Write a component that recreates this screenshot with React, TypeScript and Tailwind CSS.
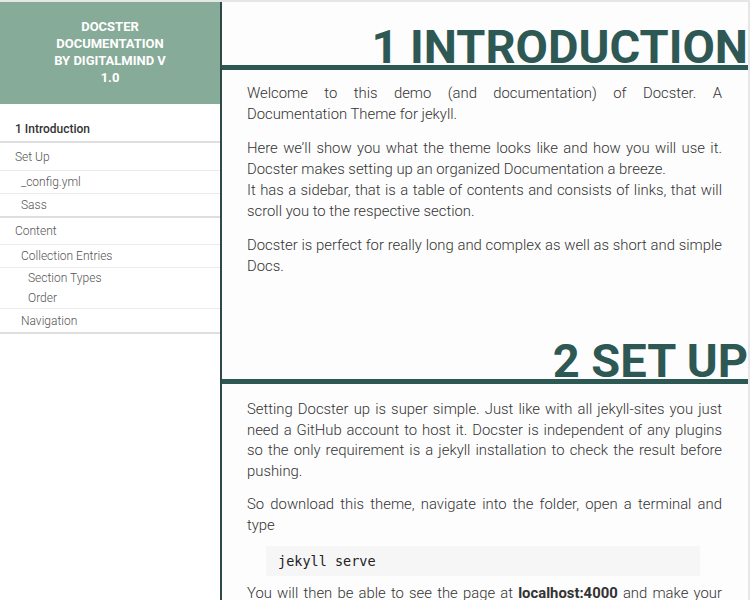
import React from 'react';

// Sidebar table of contents rows: label, indent, row height and divider style
type NavRow = {
  label: string;
  indent: string;
  height: string;
  divider: 'thick' | 'thin' | 'none';
  active?: boolean;
};

const navRows: NavRow[] = [
  { label: '1 Introduction', indent: 'pl-[15px]', height: 'h-[27px]', divider: 'thick', active: true },
  { label: 'Set Up', indent: 'pl-[15px]', height: 'h-[28px]', divider: 'thin' },
  { label: '_config.yml', indent: 'pl-[21px]', height: 'h-[23px]', divider: 'thin' },
  { label: 'Sass', indent: 'pl-[21px]', height: 'h-[24px]', divider: 'thick' },
  { label: 'Content', indent: 'pl-[15px]', height: 'h-[27px]', divider: 'thin' },
  { label: 'Collection Entries', indent: 'pl-[21px]', height: 'h-[23px]', divider: 'thin' },
  { label: 'Section Types', indent: 'pl-[28px]', height: 'h-[20px]', divider: 'none' },
  { label: 'Order', indent: 'pl-[28px]', height: 'h-[21px]', divider: 'thin' },
  { label: 'Navigation', indent: 'pl-[21px]', height: 'h-[25px]', divider: 'thick' },
];

const dividerClass = {
  thick: 'border-b-2 border-[#dedede]',
  thin: 'border-b border-[#ebebeb]',
  none: '',
};

function Sidebar() {
  return (
    <aside className="w-[222px] shrink-0 h-full bg-white border-r-2 border-[#2d4a47] flex flex-col">
      <div className="h-[102px] bg-[#87ab99] flex items-center justify-center">
        <h1 className="max-w-[116px] text-center text-white font-bold text-[13px] leading-[17px] uppercase pb-[3px]">
          Docster Documentation by digitalmind v 1.0
        </h1>
      </div>
      <nav className="mt-[12px]">
        {navRows.map((row) => (
          <a
            key={row.label}
            className={`flex items-center text-[12px] ${row.indent} ${row.height} ${dividerClass[row.divider]} ${
              row.active ? 'font-medium text-[#333]' : 'font-light text-[#555]'
            }`}
          >
            {row.label}
          </a>
        ))}
      </nav>
    </aside>
  );
}

function SectionHeading({ children }: { children: React.ReactNode }) {
  return (
    <h2 className="overflow-hidden whitespace-nowrap text-right font-bold text-[47px] leading-[36px] text-[#2e5854] border-b-[5px] border-[#2e5854] uppercase">
      {children}
    </h2>
  );
}

function Para({ children }: { children: React.ReactNode }) {
  return <p className="mb-[13px] text-justify">{children}</p>;
}

export default function App() {
  return (
    <div
      className="h-[600px] overflow-hidden flex bg-[#fdfdfd] border-t-2 border-r-2 border-[#e6e6e6]"
      style={{ fontFamily: 'Roboto, "Liberation Sans", sans-serif' }}
    >
      <Sidebar />
      <main className="flex-1 min-w-0 overflow-hidden">
        {/* Section 1 */}
        <section className="pt-[27px]">
          <SectionHeading>1 Introduction</SectionHeading>
          <div className="pl-[25px] pr-[26px] pt-[13px] font-light text-[14.85px] leading-[21px] text-[#333]">
            <Para>Welcome to this demo (and documentation) of Docster. A Documentation Theme for jekyll.</Para>
            <Para>
              Here we’ll show you what the theme looks like and how you will use it. Docster makes setting up an
              organized Documentation a breeze.
              <br />
              It has a sidebar, that is a table of contents and consists of links, that will scroll you to the
              respective section.
            </Para>
            <Para>Docster is perfect for really long and complex as well as short and simple Docs.</Para>
          </div>
        </section>

        {/* Section 2 */}
        <section className="pt-[53px]">
          <SectionHeading>2 Set Up</SectionHeading>
          <div className="pl-[25px] pr-[26px] pt-[15px] font-light text-[14.85px] leading-[20.6px] text-[#333]">
            <Para>
              Setting Docster up is super simple. Just like with all jekyll-sites you just need a GitHub account to
              host it. Docster is independent of any plugins so the only requirement is a jekyll installation to check
              the result before pushing.
            </Para>
            <Para>So download this theme, navigate into the folder, open a terminal and type</Para>
            <pre
              className="-mt-[3px] ml-[19px] mr-[22px] mb-[7px] bg-[#f6f6f6] px-[12px] py-[6px] text-[13.5px] leading-[18px] text-[#222]"
              style={{ fontFamily: '"DejaVu Sans Mono", "Liberation Mono", monospace' }}
            >
              jekyll serve
            </pre>
            <Para>
              You will then be able to see the page at <strong className="font-bold">localhost:4000</strong> and make
              your changes while watching the result live in the browser.
            </Para>
          </div>
        </section>
      </main>
    </div>
  );
}
